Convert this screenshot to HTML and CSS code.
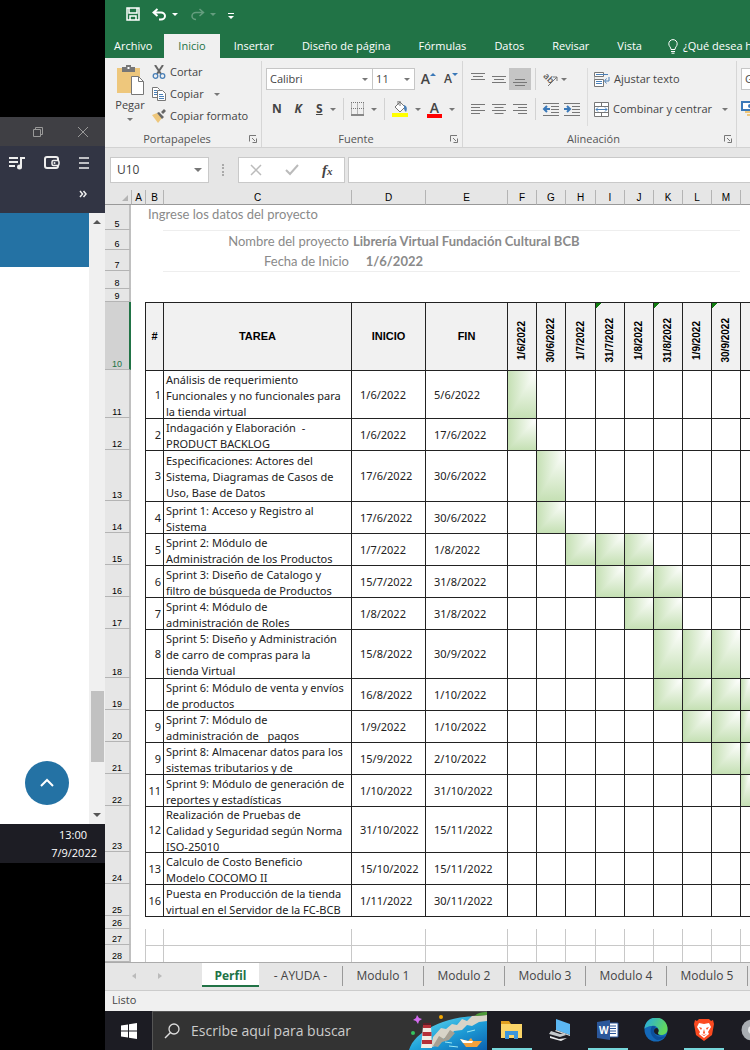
FILE: index.html
```html
<!DOCTYPE html>
<html lang="es">
<head>
<meta charset="utf-8">
<title>Perfil - Cronograma</title>
<link rel="stylesheet" href="styles.css">
</head>
<body>
<svg class="defs" aria-hidden="true">
  <symbol id="lines-top" viewBox="0 0 14 14"><path d="M0 1.500h14M2 4.500h10M0 7.500h14"/></symbol>
  <symbol id="lines-mid" viewBox="0 0 14 14"><path d="M0 4.500h14M2 7.500h10M0 10.500h14"/></symbol>
  <symbol id="lines-bot" viewBox="0 0 14 14"><path d="M2 7.500h10M0 10.500h14M2 13.500h10"/></symbol>
  <symbol id="launcher" viewBox="0 0 8 8"><path d="M.5 6.500V.5H7M3 3l3 3M7.500 3.500v4h-4" fill="none"/></symbol>
</svg>

<aside class="side">
  <div class="side-title">
    <button aria-label="Restaurar"><svg width="12" height="12" viewBox="0 0 12 12"><path d="M1.500 3.500h7v7h-7zM3.500 3.500v-2h7v7h-2"/></svg></button>
    <button aria-label="Cerrar"><svg width="12" height="12" viewBox="0 0 12 12"><path d="M1 1l10 10M11 1L1 11"/></svg></button>
  </div>
  <div class="side-tools">
    <div class="side-row">
      <button aria-label="Lista de reproducción"><svg width="16" height="14" viewBox="0 0 16 14"><path d="M0 2h9M0 6h9M0 10h6M12 11V2h4" fill="none" stroke-width="2"/><circle cx="10.500" cy="11" r="2.500" fill="#eee" stroke="none"/></svg></button>
      <button aria-label="Cartera"><svg width="16" height="14" viewBox="0 0 16 14"><rect x="1" y="1" width="13" height="11" rx="2" fill="none" stroke-width="2"/><rect x="8" y="4.500" width="7" height="5" rx="1.500" fill="#323544" stroke-width="1.500"/><circle cx="10.500" cy="7" r="1" fill="#eee" stroke="none"/></svg></button>
      <button aria-label="Menú"><svg width="10" height="14" viewBox="0 0 10 14"><path d="M0 2h10M0 7h10M0 12h10" stroke-width="1.500"/></svg></button>
    </div>
    <button class="more" aria-label="Más marcadores"><svg width="8" height="8" viewBox="0 0 8 8"><path d="M1 1l2.500 3L1 7M4.500 1L7 4 4.500 7" fill="none" stroke-width="1.500"/></svg></button>
  </div>
  <div class="side-body">
    <div class="side-page">
      <div class="banner"></div>
      <button class="to-top" aria-label="Subir"><svg width="16" height="10" viewBox="0 0 16 10"><path d="M2 8l6-6 6 6" fill="none" stroke="#fff" stroke-width="2"/></svg></button>
    </div>
    <div class="scroll"><span class="caret up"></span><span class="thumb"></span><span class="caret"></span></div>
  </div>
  <div class="clock"><span>13:00</span><span>7/9/2022</span></div>
</aside>

<main class="app">
  <header class="top">
    <div class="quick">
      <button aria-label="Guardar"><svg width="14" height="14" viewBox="0 0 14 14"><path d="M1 1h12v12H1zM3 1v5h8V1M4 13V9h6v4" fill="none" stroke="#fff" stroke-width="1.500"/></svg></button>
      <button aria-label="Deshacer"><svg width="15" height="13" viewBox="0 0 15 13"><path d="M1.500 4.500H9a4 3.500 0 0 1 0 7H7M5.500 1l-4 3.500 4 3.500" fill="none" stroke="#fff" stroke-width="2"/></svg><i class="caret"></i></button>
      <button class="dim" aria-label="Rehacer"><svg width="15" height="13" viewBox="0 0 15 13"><path d="M13.500 4.500H6a4 3.500 0 0 0 0 7M9.500 1l4 3.500-4 3.500" fill="none" stroke="#fff" stroke-width="1.500"/></svg><i class="caret"></i></button>
      <button class="custom" aria-label="Personalizar"><i class="caret"></i></button>
    </div>
    <nav class="tabs">
      <button class="file">Archivo</button>
      <button class="active">Inicio</button>
      <button>Insertar</button>
      <button>Diseño de página</button>
      <button>Fórmulas</button>
      <button>Datos</button>
      <button>Revisar</button>
      <button>Vista</button>
      <button class="tell"><svg width="10" height="15" viewBox="0 0 10 15"><path d="M3 10.500C3 8 .8 7.500.8 4.800a4.200 4.200 0 0 1 8.400 0C9.200 7.500 7 8 7 10.500zM3 12.500h4M3.500 14.200h3" fill="none" stroke="#fff"/></svg>¿Qué desea h</button>
    </nav>
  </header>

  <section class="ribbon">
    <div class="group clip">
      <div class="group-body">
        <button class="paste">
          <svg width="27" height="30" viewBox="0 0 27 30"><path d="M0 3h23v25H0z" fill="#eec77c"/><path d="M5 2h4V0h5v2h4v5H5z" fill="#777"/><path d="M10.500 2h2v2h-2z" fill="#fff"/><path d="M14.500 11.500h7l5 5v13h-12z" fill="#fff" stroke="#777"/><path d="M21.500 11.500v5h5" fill="none" stroke="#777"/></svg>
          Pegar<i class="caret"></i>
        </button>
        <div class="clip-list">
          <button><svg width="14" height="14" viewBox="0 0 14 14"><path d="M3 0l6 9M11 0L5 9" stroke="#666" stroke-width="2"/><circle cx="3.500" cy="11" r="2.300" fill="none" stroke="#4a80b8" stroke-width="1.300"/><circle cx="10.500" cy="11" r="2.300" fill="none" stroke="#4a80b8" stroke-width="1.300"/></svg>Cortar</button>
          <button><svg width="14" height="14" viewBox="0 0 14 14"><path d="M.5.5h5l2 2v8h-7z" fill="#fff" stroke="#777"/><path d="M5.500 3.500h5l3 3v7h-8z" fill="#fff" stroke="#777"/><path d="M2 3.500h3M2 5.500h3M2 7.500h3M7 7.500h4M7 9.500h5M7 11.500h5" stroke="#4a80b8"/></svg>Copiar<i class="caret"></i></button>
          <button><svg width="14" height="14" viewBox="0 0 14 14"><path d="M0 6l5-2 5 5-4 5z" fill="#eec77c"/><path d="M5 4l2-1 5 5-2 2zM9 3l3-3 2 2-3 3z" fill="#666"/></svg>Copiar formato</button>
        </div>
      </div>
      <div class="group-label"><span>Portapapeles</span><svg width="8" height="8"><use href="#launcher"/></svg></div>
    </div>

    <div class="group font">
      <div class="group-body stack">
        <div class="line">
          <label class="combo wide"><select aria-label="Fuente"><option>Calibri</option></select><i class="caret"></i></label>
          <label class="combo small"><select aria-label="Tamaño de fuente"><option>11</option></select><i class="caret"></i></label>
          <button class="size big" aria-label="Aumentar tamaño">A<i class="caret up"></i></button>
          <button class="size" aria-label="Reducir tamaño">A<i class="caret"></i></button>
        </div>
        <div class="line marks">
          <button><b>N</b></button>
          <button><b><em>K</em></b></button>
          <button><b><u>S</u></b></button><i class="caret"></i>
          <span class="sep"></span>
          <button aria-label="Bordes"><svg width="13" height="14" viewBox="0 0 13 14"><path d="M.5.5v12M12.500.5v12M6.500.5v12M0 .5h13M0 6.500h13" stroke="#777" stroke-dasharray="1 1"/><path d="M0 13h13" stroke="#666" stroke-width="1.500"/></svg></button><i class="caret"></i>
          <span class="sep"></span>
          <button aria-label="Color de relleno"><svg width="16" height="16" viewBox="0 0 16 16"><path d="M3 6l5-5 5 5-5 5zM6 4V0h2v5" fill="#fff" stroke="#777"/><path d="M12 4c3 1 3.500 4 2 7-1-1-2-2-2-4z" fill="#4a80b8"/><path d="M0 12h16v4H0z" fill="#ff0"/></svg></button><i class="caret"></i>
          <button class="ink" aria-label="Color de fuente">A</button><i class="caret"></i>
        </div>
      </div>
      <div class="group-label"><span>Fuente</span><svg width="8" height="8"><use href="#launcher"/></svg></div>
    </div>

    <div class="group align">
      <div class="group-body">
        <div class="align-grid">
          <button aria-label="Alinear arriba"><svg width="14" height="14"><use href="#lines-top"/></svg></button>
          <button aria-label="Alinear al medio"><svg width="14" height="14"><use href="#lines-mid"/></svg></button>
          <button class="on" aria-label="Alinear abajo"><svg width="14" height="14"><use href="#lines-bot"/></svg></button>
          <span class="sep"></span>
          <button class="turn" aria-label="Orientación"><svg width="16" height="16" viewBox="0 0 16 16"><text x="0" y="9" transform="rotate(45 4 7)" class="ab">ab</text><path d="M5 15L14 6M14 10V6h-4" fill="none"/></svg></button><i class="caret"></i>
          <button aria-label="Alinear a la izquierda"><svg width="14" height="14" viewBox="0 0 14 14"><path d="M0 2.500h14M0 5.500h9M0 8.500h14M0 11.500h9"/></svg></button>
          <button aria-label="Centrar"><svg width="14" height="14" viewBox="0 0 14 14"><path d="M0 2.500h14M2.500 5.500h9M0 8.500h14M2.500 11.500h9"/></svg></button>
          <button aria-label="Alinear a la derecha"><svg width="14" height="14" viewBox="0 0 14 14"><path d="M0 2.500h14M5 5.500h9M0 8.500h14M5 11.500h9"/></svg></button>
          <span class="sep"></span>
          <button aria-label="Disminuir sangría"><svg width="16" height="14" viewBox="0 0 16 14"><path d="M0 1.500h16M8 4.500h8M8 7.500h8M8 10.500h8M0 13.500h16"/><path d="M7 7H2M4 4L1 7l3 3" stroke="#3a78b8" stroke-width="2" fill="none"/></svg></button>
          <button aria-label="Aumentar sangría"><svg width="16" height="14" viewBox="0 0 16 14"><path d="M0 1.500h16M8 4.500h8M8 7.500h8M8 10.500h8M0 13.500h16"/><path d="M0 7h5M3 4l3 3-3 3" stroke="#3a78b8" stroke-width="2" fill="none"/></svg></button>
        </div>
        <div class="wrap-list">
          <button><svg width="16" height="16" viewBox="0 0 16 16"><path d="M.5 1.500h9v4h-9zM.5 8.500h9v7h-9zM0 5.500v3" fill="#fff"/><path d="M2 3.500h12M2 10.500h6M2 12.500h6M15 6v4h-4M12.500 7.500l-2 2.500 2 2.500" stroke="#4a80b8" fill="none"/></svg>Ajustar texto</button>
          <button><svg width="15" height="15" viewBox="0 0 15 15"><path d="M.5.5h14v14H.5zM0 4.500h15M0 10.500h15M7.500 0v4M7.500 11v4" fill="#fff"/><path d="M2 7.500h11M4 5.500l-2 2 2 2M11 5.500l2 2-2 2" stroke="#4a80b8" fill="none"/></svg>Combinar y centrar<i class="caret"></i></button>
        </div>
      </div>
      <div class="group-label"><span>Alineación</span><svg width="8" height="8"><use href="#launcher"/></svg></div>
    </div>

    <div class="group number">
      <div class="group-body stack">
        <div class="line"><label class="combo wide"><select aria-label="Formato de número"><option>General</option></select></label></div>
        <div class="line"><button aria-label="Moneda"><svg width="18" height="16" viewBox="0 0 18 16"><path d="M1 1h16v8H1z" fill="#fff" stroke="#3a78b8" stroke-width="2"/><circle cx="9" cy="5" r="2" fill="#3a78b8" stroke="none"/><path d="M4 11h8M6 14h8" stroke="#eec77c" stroke-width="2"/></svg></button></div>
      </div>
    </div>
  </section>

  <section class="formula">
    <label class="name-box"><input aria-label="Cuadro de nombres" value="U10"><i class="caret"></i></label>
    <span class="dots"></span>
    <div class="fx">
      <button aria-label="Cancelar"><svg width="12" height="12" viewBox="0 0 12 12"><path d="M1 1l10 10M11 1L1 11" stroke="#bbb" stroke-width="1.500"/></svg></button>
      <button aria-label="Introducir"><svg width="14" height="12" viewBox="0 0 14 12"><path d="M1 6l4 4 8-9" fill="none" stroke="#bbb" stroke-width="2"/></svg></button>
      <button class="fn" aria-label="Insertar función"><em>f<small>x</small></em></button>
    </div>
    <input class="formula-input" aria-label="Barra de fórmulas">
  </section>

  <section class="sheet">
    <table>
      <colgroup><col class="c-row"><col class="c-a"><col class="c-b"><col class="c-c"><col class="c-d"><col class="c-e"><col class="c-m"><col class="c-m"><col class="c-m2"><col class="c-m"><col class="c-m"><col class="c-m"><col class="c-m"><col class="c-m"><col></colgroup>
      <thead><tr><th class="corner"><svg width="6" height="6" viewBox="0 0 6 6"><path d="M6 0v6H0z" fill="#b4b4b4"/></svg></th><th>A</th><th>B</th><th>C</th><th>D</th><th>E</th><th>F</th><th>G</th><th>H</th><th>I</th><th>J</th><th>K</th><th>L</th><th>M</th><th></th></tr></thead>
      <tbody class="intro">
        <tr class="h25"><th>5</th><td></td><td colspan="13" class="hint">Ingrese los datos del proyecto</td></tr>
        <tr class="h20"><th>6</th><td></td><td></td><td class="ruled right">Nombre del proyecto</td><td colspan="10" class="ruled strong">Librería Virtual Fundación Cultural BCB</td><td></td></tr>
        <tr class="h21"><th>7</th><td></td><td></td><td class="right">Fecha de Inicio</td><td class="strong right">1/6/2022</td><td colspan="10"></td></tr>
        <tr class="h18"><th>8</th><td></td><td></td><td colspan="11" class="ruled"></td><td></td></tr>
        <tr class="h13"><th>9</th><td colspan="14"></td></tr>
      </tbody>
      <tbody class="plan">
        <tr class="head"><th class="sel">10</th><td></td><td>#</td><td>TAREA</td><td>INICIO</td><td>FIN</td><td><span>1/6/2022</span></td><td><span>30/6/2022</span></td><td><span>1/7/2022</span></td><td class="flag"><span>31/7/2022</span></td><td><span>1/8/2022</span></td><td class="flag"><span>31/8/2022</span></td><td><span>1/9/2022</span></td><td class="flag"><span>30/9/2022</span></td><td></td></tr>
        <tr class="h48"><th>11</th><td></td><td>1</td><td><p>Análisis de requerimiento<br>Funcionales y no funcionales para<br>la tienda virtual</p></td><td>1/6/2022</td><td>5/6/2022</td><td class="on"></td><td></td><td></td><td></td><td></td><td></td><td></td><td></td><td></td></tr>
        <tr class="h32"><th>12</th><td></td><td>2</td><td><p>Indagación y Elaboración&nbsp; -<br>PRODUCT BACKLOG</p></td><td>1/6/2022</td><td>17/6/2022</td><td class="on"></td><td></td><td></td><td></td><td></td><td></td><td></td><td></td><td></td></tr>
        <tr class="h51"><th>13</th><td></td><td>3</td><td><p>Especificaciones: Actores del<br>Sistema, Diagramas de Casos de<br>Uso, Base de Datos</p></td><td>17/6/2022</td><td>30/6/2022</td><td></td><td class="on"></td><td></td><td></td><td></td><td></td><td></td><td></td><td></td></tr>
        <tr class="h32"><th>14</th><td></td><td>4</td><td><p>Sprint 1: Acceso y Registro al<br>Sistema</p></td><td>17/6/2022</td><td>30/6/2022</td><td></td><td class="on"></td><td></td><td></td><td></td><td></td><td></td><td></td><td></td></tr>
        <tr class="h32"><th>15</th><td></td><td>5</td><td><p>Sprint 2: Módulo de<br>Administración de los Productos</p></td><td>1/7/2022</td><td>1/8/2022</td><td></td><td></td><td class="on"></td><td class="on"></td><td class="on"></td><td></td><td></td><td></td><td></td></tr>
        <tr class="h32"><th>16</th><td></td><td>6</td><td><p>Sprint 3: Diseño de Catalogo y<br>filtro de búsqueda de Productos</p></td><td>15/7/2022</td><td>31/8/2022</td><td></td><td></td><td></td><td class="on"></td><td class="on"></td><td class="on"></td><td></td><td></td><td></td></tr>
        <tr class="h32"><th>17</th><td></td><td>7</td><td><p>Sprint 4: Módulo de<br>administración de Roles</p></td><td>1/8/2022</td><td>31/8/2022</td><td></td><td></td><td></td><td></td><td class="on"></td><td class="on"></td><td></td><td></td><td></td></tr>
        <tr class="h49"><th>18</th><td></td><td>8</td><td><p>Sprint 5: Diseño y Administración<br>de carro de compras para la<br>tienda Virtual</p></td><td>15/8/2022</td><td>30/9/2022</td><td></td><td></td><td></td><td></td><td></td><td class="on"></td><td class="on"></td><td class="on"></td><td></td></tr>
        <tr class="h32"><th>19</th><td></td><td></td><td><p>Sprint 6: Módulo de venta y envíos<br>de productos</p></td><td>16/8/2022</td><td>1/10/2022</td><td></td><td></td><td></td><td></td><td></td><td class="on"></td><td class="on"></td><td class="on"></td><td class="on"></td></tr>
        <tr class="h32"><th>20</th><td></td><td>9</td><td><p>Sprint 7: Módulo de<br>administración de&nbsp;&nbsp; pagos</p></td><td>1/9/2022</td><td>1/10/2022</td><td></td><td></td><td></td><td></td><td></td><td></td><td class="on"></td><td class="on"></td><td class="on"></td></tr>
        <tr class="h32"><th>21</th><td></td><td>9</td><td><p>Sprint 8: Almacenar datos para los<br>sistemas tributarios y de</p></td><td>15/9/2022</td><td>2/10/2022</td><td></td><td></td><td></td><td></td><td></td><td></td><td></td><td class="on"></td><td class="on"></td></tr>
        <tr class="h32"><th>22</th><td></td><td>11</td><td><p>Sprint 9: Módulo de generación de<br>reportes y estadísticas</p></td><td>1/10/2022</td><td>31/10/2022</td><td></td><td></td><td></td><td></td><td></td><td></td><td></td><td></td><td class="on"></td></tr>
        <tr class="h46"><th>23</th><td></td><td>12</td><td><p>Realización de Pruebas de<br>Calidad y Seguridad según Norma<br>ISO-25010</p></td><td>31/10/2022</td><td>15/11/2022</td><td></td><td></td><td></td><td></td><td></td><td></td><td></td><td></td><td></td></tr>
        <tr class="h32"><th>24</th><td></td><td>13</td><td><p>Calculo de Costo Beneficio<br>Modelo COCOMO II</p></td><td>15/10/2022</td><td>15/11/2022</td><td></td><td></td><td></td><td></td><td></td><td></td><td></td><td></td><td></td></tr>
        <tr class="h32"><th>25</th><td></td><td>16</td><td><p>Puesta en Producción de la tienda<br>virtual en el Servidor de la FC-BCB</p></td><td>1/11/2022</td><td>30/11/2022</td><td></td><td></td><td></td><td></td><td></td><td></td><td></td><td></td><td></td></tr>
      </tbody>
      <tbody class="rest">
        <tr class="h13 close"><th>26</th><td></td><td colspan="13"></td></tr>
        <tr class="h16"><th>27</th><td></td><td></td><td></td><td></td><td></td><td></td><td></td><td></td><td></td><td></td><td></td><td></td><td></td><td></td></tr>
        <tr class="h17 lined"><th>28</th><td></td><td></td><td></td><td></td><td></td><td></td><td></td><td></td><td></td><td></td><td></td><td></td><td></td><td></td></tr>
      </tbody>
    </table>
  </section>

  <nav class="sheets">
    <div class="arrows"><i class="caret left"></i><i class="caret rightward"></i></div>
    <button class="active">Perfil</button>
    <button>- AYUDA -</button>
    <button>Modulo 1</button>
    <button>Modulo 2</button>
    <button>Modulo 3</button>
    <button>Modulo 4</button>
    <button>Modulo 5</button>
    <button aria-label="Siguiente"></button>
  </nav>
  <div class="status">Listo</div>

  <footer class="taskbar">
    <button class="start" aria-label="Inicio de Windows"><svg width="16" height="16" viewBox="0 0 16 16"><path d="M0 2.500l7-1v6H0zM8 1.300L16 0v7.500H8zM0 8.500h7v6l-7-1zM8 8.500h8V16l-8-1.300z" fill="#fff"/></svg></button>
    <label class="search">
      <svg width="16" height="16" viewBox="0 0 16 16"><circle cx="10" cy="6" r="5" fill="none" stroke="#ddd" stroke-width="1.300"/><path d="M6.500 9.500L1 15" stroke="#ddd" stroke-width="1.500"/></svg>
      <input placeholder="Escribe aquí para buscar">
      <svg class="scene" width="78" height="38" viewBox="0 0 78 38">
        <defs><linearGradient id="sea" x1="0" y1="0" x2="1" y2="1"><stop offset="0" stop-color="#7fe6ee"/><stop offset=".5" stop-color="#20a5dc"/><stop offset="1" stop-color="#0c62b0"/></linearGradient></defs>
        <path d="M0 38C5 20 35 4 70 4h8v34z" fill="url(#sea)"/>
        <path d="M22 34l2-9 8-9 5 1 6-5 5 1 5-6 5 2 5-5 15-1v6l-8 1-7 4-5-1-5 5-8 1-4 5-7 3-5 6-6 2z" fill="#d8d4c8"/>
        <path d="M24 34l6-10 5 3 6-9 5 3-6 7-7 2-4 5z" fill="#a6a093"/>
        <path d="M66 4c2-3 6-4 12-4v3z" fill="#4e9a38"/>
        <path d="M14 14h8l1 22H12z" fill="#f3ece4"/><path d="M14 12h8v4h-8zM13.500 20h9v4h-9zM13 28h10v4H13z" fill="#b53038"/><path d="M14 11h8v2h-8z" fill="#5c2028"/>
        <path d="M8 3l2 3 3 1-3 2-1 3-2-3-3-1 3-2z" fill="#d46cf0"/><circle cx="4" cy="21" r="2" fill="#35c25f"/><circle cx="32" cy="5" r="2" fill="#f5a800"/>
        <path d="M51 27l8 2 3-3 2 3h9l-5 6H57z" fill="#f3a13c"/><path d="M51 27l8 2h5l-1 2H54z" fill="#fff"/>
        <path d="M36 30l7 1M40 34l9 1M58 20l8-2" stroke="#9be8f4"/>
      </svg>
    </label>
    <div class="pins">
      <button class="run" aria-label="Explorador"><svg width="22" height="20" viewBox="0 0 22 20"><path d="M0 1h8l2 3H0z" fill="#e0a020"/><path d="M0 4h21v14H0z" fill="#fbd568"/><path d="M4 19v-8h13v8h-4v-4H8v4z" fill="#3b96dc"/></svg></button>
      <button aria-label="Equipo"><svg width="24" height="22" viewBox="0 0 24 22"><path d="M8 0l14 5v11L8 11z" fill="#5cb8f4"/><path d="M8 11l14 5v1L7 12z" fill="#ddd"/><path d="M3 12l9 3 4-1 2 2-6 2-11-3z" fill="#c4c8cc"/><path d="M2 17l9 3 8-1-6 3-11-3z" fill="#e8eaec"/></svg></button>
      <button class="run" aria-label="Word"><svg width="22" height="20" viewBox="0 0 22 20"><path d="M11 3h10v14H11z" fill="#fff" stroke="#2b579a"/><path d="M13 6h6M13 8.500h6M13 11h6M13 13.500h6" stroke="#2b579a"/><path d="M0 2l13-2v20L0 18z" fill="#2b579a"/><text x="2" y="14" class="w">W</text></svg></button>
      <button aria-label="Edge"><svg width="24" height="24" viewBox="0 0 24 24"><defs><linearGradient id="edge" x1="0" y1="0" x2="1" y2=".4"><stop offset="0" stop-color="#24a9e8"/><stop offset="1" stop-color="#62d85c"/></linearGradient></defs><circle cx="12" cy="12" r="11.500" fill="#1468b8"/><path d="M.5 11A11.500 11.500 0 0 1 23.500 11c.3 4-3 6-6.500 6-3 0-4-1.500-3-3 2-4-3-7-6-6-4 0-7 2-7.500 3z" fill="url(#edge)"/><path d="M8 8c-3 5-1 11 5 14 4 0 7-2 8-4-5 2-11 0-11-5 0-2 1-4 2-4-1-1-3-1-4-1z" fill="#0c4f9c"/><path d="M13 10c2 1 2 3 1 5 0 2 2 2.500 5 2-5 1-9-1-9-4 0-2 1-3 3-3z" fill="#1c1d24"/></svg></button>
      <button class="run" aria-label="Brave"><svg width="20" height="24" viewBox="0 0 20 24"><path d="M5 1h10l2 2 2-1 1 4-2 11-8 6-8-6L0 6l1-4 2 1z" fill="#fb4a20"/><path d="M5 5l5 1 5-1 2 4-3 5 1 2-5 4-5-4 1-2-3-5z" fill="#fff"/><path d="M5 9l3 1-1 2zM15 9l-3 1 1 2zM10 11l1 4-1 1-1-1zM7 16l3 1 3-1-3 2z" fill="#fb4a20"/></svg></button>
      <button aria-label="Disco"><svg width="22" height="22" viewBox="0 0 22 22"><circle cx="11" cy="11" r="10.500" fill="#a9adb2"/><circle cx="11" cy="11" r="4" fill="#e4e6e8"/></svg></button>
    </div>
  </footer>
</main>
</body>
</html>
```
FILE: styles.css
```css
* { box-sizing: border-box; }
body {
  margin: 0;
  min-height: 100vh;
  display: flex;
  overflow-x: hidden;
  background: #000;
  font: 11px/16px "Open Sans", "Noto Sans", sans-serif;
  color: #444;
}
button, input, select { font: inherit; color: inherit; border: 0; background: none; padding: 0; margin: 0; outline: 0; }
button { display: flex; align-items: center; justify-content: center; white-space: nowrap; }
svg { flex: none; display: block; }
p { margin: 0; }
.defs { position: absolute; width: 0; height: 0; }
.caret { flex: none; width: 0; height: 0; border: 3px solid transparent; border-top-color: #777; border-bottom-width: 0; }
.caret.up { border-width: 0 3px 3px; border-bottom-color: #555; }

/* Ventana lateral */
.side { flex: 0 0 105px; display: flex; flex-direction: column; padding-top: 117px; }
.side-title { height: 29px; background: #3f3f44; display: flex; align-items: center; justify-content: flex-end; gap: 33px; padding-right: 16px; }
.side-title svg { stroke: #999; fill: none; }
.side-tools { height: 67px; background: #323544; padding: 10px 16px 0 9px; }
.side-tools svg { stroke: #eee; }
.side-row { display: flex; justify-content: space-between; margin-bottom: 20px; }
.more { margin: 0 2px 0 auto; }
.side-body { height: 611px; display: flex; background: #fff; }
.side-page { flex: 1; display: flex; flex-direction: column; }
.banner { height: 54px; background: #2472a4; }
.to-top { width: 44px; height: 44px; border-radius: 50%; background: #2472a4; margin: auto 20px 19px auto; }
.scroll { width: 16px; background: #f0f0f0; display: flex; flex-direction: column; align-items: center; padding: 7px 0; }
.scroll .caret { border-width: 4px 4px 0; border-top-color: #555; }
.scroll .caret.up { border-width: 0 4px 4px; }
.thumb { width: 13px; height: 71px; background: #c1c1c1; margin-top: auto; margin-bottom: 51px; }
.clock { height: 39px; background: #1d1d24; color: #fff; text-align: right; display: flex; flex-direction: column; padding: 2px 8px; line-height: 18px; }
.clock span:first-child { padding-right: 10px; }

/* Barra superior */
.app { flex: 1; min-width: 0; display: flex; flex-direction: column; background: #fff; overflow: hidden; }
.top { height: 58px; background: #217346; color: #fff; display: flex; flex-direction: column; justify-content: space-between; }
.quick { display: flex; align-items: center; gap: 12px; padding: 7px 21px 0; }
.quick .caret { border-top-color: #fff; margin-left: 5px; }
.quick .dim { opacity: .3; }
.quick .custom { border-top: 1px solid #fff; padding-top: 2px; margin-top: 4px; }
.quick .custom .caret { margin: 0; }
.tabs { display: flex; height: 24px; }
.tabs button { padding: 0 14px; }
.tabs .file { padding: 0 12px 0 9px; }
.tabs .active { background: #f0f0f0; color: #217346; }
.tabs .tell { gap: 5px; padding-left: 12px; }

/* Cinta */
.ribbon { height: 90px; background: #f0f0f0; border-bottom: 1px solid #d2d2d2; display: flex; }
.group { flex: none; display: flex; flex-direction: column; border-right: 1px solid #d6d6d6; margin: 3px 0 0; }
.group-body { flex: 1; display: flex; }
.group-label { display: flex; align-items: center; padding-right: 4px; color: #555; }
.group-label span { flex: 1; text-align: center; }
.group-label svg { stroke: #777; }
.clip { width: 157px; }
.font { width: 201px; }
.align { width: 274px; }
.number { border: 0; width: 120px; }
.paste { flex-direction: column; justify-content: flex-start; width: 32px; margin: 4px 6px 0 9px; }
.paste svg { margin-bottom: 2px; }
.paste .caret { margin-top: 5px; }
.clip-list button { height: 22px; gap: 4px; }
.clip-list .caret { margin-left: 6px; }
.stack { flex-direction: column; gap: 8px; padding: 7px 4px 0; }
.line { display: flex; align-items: center; height: 22px; }
.combo { display: flex; align-items: center; height: 22px; background: #fff; border: 1px solid #c6c6c6; padding: 0 4px 0 3px; }
.combo.wide { width: 108px; }
.combo.small { width: 42px; border-left: 0; }
.combo select { appearance: none; flex: 1; min-width: 0; }
.size { font-size: 12px; font-weight: 600; align-items: center; margin-left: 8px; }
.size.big { font-size: 14px; margin-left: 6px; }
.size .caret { align-self: flex-start; margin-top: 2px; border-top-color: #3a78b8; }
.size .caret.up { border-top-color: transparent; border-bottom-color: #3a78b8; }
.marks { padding-left: 6px; font-size: 12px; }
.marks button { min-width: 9px; margin-right: 12px; }
.marks .caret { margin-left: -6px; }
.marks .sep { margin: 0 7px; }
.marks .sep ~ button { margin-right: 13px; }
.ink { font-size: 14px; font-weight: 600; line-height: 13px; width: 15px; border-bottom: 4px solid #f00; margin-left: 6px; }
.marks .ink + .caret { margin-left: -6px; }
.sep { width: 1px; height: 22px; background: #d2d2d2; }
.align-grid { display: grid; grid-template-columns: 21px 21px 22px 9px 21px 22px; grid-auto-rows: 22px; row-gap: 8px; padding: 7px 0 0 4px; justify-items: center; align-items: center; align-content: start; }
.align-grid svg, .align-grid use, .wrap-list svg { stroke: #777; }
.align-grid svg { overflow: visible; }
.align-grid .on { background: #c5c5c5; width: 22px; height: 22px; }
.align-grid .caret { justify-self: start; }
.ab { font: 600 9px "Open Sans", sans-serif; fill: #555; stroke: none; }
.wrap-list { margin: 7px 0 5px 4px; padding-left: 6px; border-left: 1px solid #dcdcdc; display: flex; flex-direction: column; gap: 8px; align-items: flex-start; }
.wrap-list button { height: 22px; gap: 4px; }
.wrap-list .caret { margin-left: 6px; }

/* Barra de fórmulas */
.formula { height: 42px; background: #e6e6e6; display: flex; padding: 9px 0 7px 5px; }
.name-box, .fx, .formula-input { background: #fff; border: 1px solid #c9c9c9; }
.name-box { width: 99px; display: flex; align-items: center; padding: 0 6px; }
.name-box input { flex: 1; min-width: 0; font-size: 12px; }
.name-box .caret { border-width: 4px 4px 0; }
.dots { width: 3px; margin: 7px 13px; border-left: 2px dotted #aaa; }
.fx { width: 107px; display: flex; align-items: center; justify-content: space-around; margin-right: 3px; }
.fn { font: 600 15px "Liberation Serif", serif; }
.fn small { font-size: 11px; }
.formula-input { flex: 1; min-width: 0; border-right: 0; }

/* Hoja */
table { width: 100%; min-width: 640px; table-layout: fixed; border-collapse: separate; border-spacing: 0; }
.c-row { width: 26px; } .c-a { width: 14px; } .c-b { width: 18px; } .c-c { width: 188px; }
.c-d { width: 74px; } .c-e { width: 82px; } .c-m { width: 29px; } .c-m2 { width: 30px; }
th, td { padding: 0; white-space: nowrap; overflow: visible; }
thead th { height: 15px; background: #e6e6e6; border-left: 1px solid #b4b4b4; border-bottom: 1px solid #999; font: 10px/12px "Liberation Sans", sans-serif; color: #000; vertical-align: bottom; }
thead .corner { border-left: 0; }
.corner svg { margin: 0 3px 3px auto; }
tbody th { font: 9px/10px "Liberation Sans", sans-serif; color: #000; background: #e6e6e6; border-right: 2px solid #c0c0c0; border-bottom: 1px solid #b4b4b4; vertical-align: bottom; }
tbody .sel { background: #d2d2d2; color: #217346; border-right-color: #217346; }
.h13 { height: 13px; } .h16 { height: 16px; } .h17 { height: 17px; } .h18 { height: 18px; } .h20 { height: 20px; }
.h21 { height: 21px; } .h25 { height: 25px; } .h32 { height: 32px; } .h46 { height: 46px; } .h48 { height: 48px; }
.h49 { height: 49px; } .h51 { height: 51px; } .head { height: 68px; }
.intro td { font: 13px/18px Lato, sans-serif; color: #8a8a8a; }
.intro .hint { vertical-align: top; padding-left: 3px; }
.intro .right { text-align: right; padding-right: 2px; }
.intro .strong { font-weight: 700; }
.intro .ruled { border-top: 1px solid #eee; }
.intro .strong:not(.right) { padding-left: 2px; }
.plan td { font-family: "Noto Sans", "Open Sans", sans-serif; }
.plan td:nth-child(n+3) { border-left: 1px solid #222; border-top: 1px solid #222; color: #222; }
.plan td:nth-child(3) { text-align: right; padding-right: 2px; }
.plan td:nth-child(4) { padding-left: 2px; }
.plan td:nth-child(5), .plan td:nth-child(6) { padding-left: 8px; }
.plan p { margin: -1px 0 -3px; }
.plan .head td:nth-child(n+3) { background: #f1f1f1; font: 700 11px/13px "Liberation Sans", sans-serif; color: #000; text-align: center; padding: 0; }
.plan .head td:nth-child(n+7) { padding-top: 7px; }
.head td span { display: inline-block; writing-mode: vertical-rl; rotate: 180deg; font-size: 10px; line-height: 12px; vertical-align: middle; }
.plan .head td.flag { background: linear-gradient(135deg, #107c10 4px, #f1f1f1 4px); }
.plan td.on { background: linear-gradient(to left, #fff, #c5e0b4), linear-gradient(to bottom, #fff, #c5e0b4); background-blend-mode: darken; }
.rest td:nth-child(n+3) { border-left: 1px solid #c8c8c8; }
.rest .close td:nth-child(n+3) { border-left: 0; border-top: 1px solid #222; }
.rest .lined td:nth-child(n+3) { border-top: 1px solid #c8c8c8; }

/* Pestañas de hoja */
.sheets { height: 29px; background: #e6e6e6; border-top: 1px solid #ababab; border-bottom: 1px solid #ccc; display: flex; align-items: flex-start; font-size: 12px; }
.arrows { flex: none; width: 97px; display: flex; gap: 22px; padding: 10px 0 0 27px; }
.caret.left { border-width: 3px 4px 3px 0; border-color: transparent #bbb; }
.caret.rightward { border-width: 3px 0 3px 4px; border-color: transparent #bbb; }
.sheets button { flex: none; width: 81px; height: 20px; margin-top: 3px; border-left: 1px solid #999; }
.sheets .active { width: 57px; height: 24px; margin: 0; padding-top: 3px; background: #fff; color: #217346; font-weight: 700; border: 0; border-bottom: 2px solid #217346; }
.sheets .active + button { width: 83px; border: 0; }
.status { height: 20px; background: #f0f0f0; padding: 1px 7px; }

/* Barra de tareas */
.taskbar { flex: 1; min-height: 39px; max-height: 39px; background: #1c1c23; display: flex; }
.start { flex: none; width: 47px; }
.search { flex: none; width: 335px; background: #333; border: 1px solid #555; border-width: 1px 0 0 1px; display: flex; align-items: center; padding-left: 11px; color: #ccc; font-size: 14px; }
.search input { flex: 1; min-width: 0; margin-left: 11px; }
.search input::placeholder { color: #ccc; opacity: 1; }
.pins { display: flex; flex: none; gap: 8px; padding-left: 5px; }
.pins button { width: 40px; border-bottom: 2px solid transparent; }
.pins .run { border-bottom-color: #76d6da; }
.w { font: 700 10px "Open Sans", sans-serif; fill: #fff; }
```
